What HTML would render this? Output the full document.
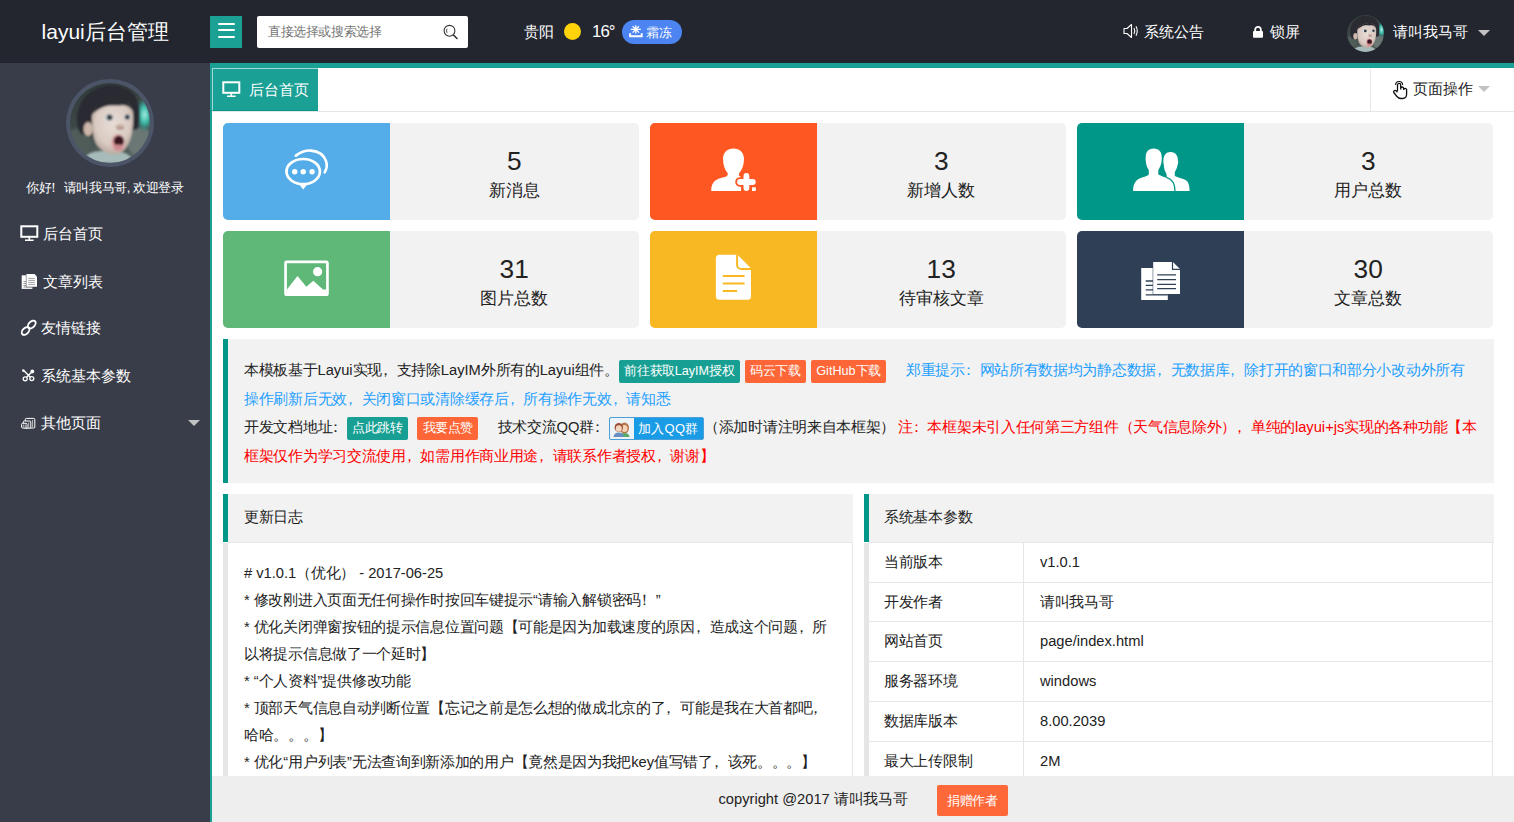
<!DOCTYPE html>
<html><head><meta charset="utf-8">
<style>
*{margin:0;padding:0;box-sizing:border-box}
html,body{width:1514px;height:822px;overflow:hidden;background:#fff}
body{font-family:"Liberation Sans",sans-serif;color:#222;position:relative}
.a{position:absolute}
.nw{white-space:nowrap}
#hdr{left:0;top:0;width:1514px;height:63px;background:#23262E}
#side{left:0;top:63px;width:210px;height:759px;background:#393D49}
#mainb{left:210px;top:63px;width:1304px;height:759px;border-left:2px solid #1AA094;border-top:5px solid #1AA094;background:#fff}
.card{position:absolute;height:98px;border-radius:5px;overflow:hidden;background:#f2f2f2}
.card .ic{position:absolute;left:0;top:0;bottom:0;width:166.8px}
.card .num{position:absolute;left:40%;right:0;text-align:center;font-size:26.25px;line-height:34px;top:21px;color:#222}
.card .lbl{position:absolute;left:40%;right:0;text-align:center;font-size:16.8px;line-height:22px;top:57px;color:#222}
.btn{display:inline-block;height:22.5px;line-height:22.5px;padding:0;white-space:nowrap;font-size:13px;letter-spacing:-0.4px;color:#fff;border-radius:2px;vertical-align:middle}
.t15{font-size:15px;letter-spacing:-0.3px}
.t13{font-size:13px;letter-spacing:-0.4px}
.t17{font-size:17px;letter-spacing:-0.2px}
.L{font-size:14.7px;letter-spacing:0}
.p{font-style:normal;position:relative;left:-4px}
.L13{font-size:12.6px;letter-spacing:0}
.g{background:#189F93}
.o{background:#FE6637}
</style></head>
<body>
<svg width="0" height="0" style="position:absolute"><defs>
<clipPath id="cc"><circle cx="50" cy="50" r="50"/></clipPath>
<filter id="bl" x="-10%" y="-10%" width="120%" height="120%"><feGaussianBlur stdDeviation="1.1"/></filter>
<linearGradient id="bgg" x1="0" y1="0" x2="0.3" y2="1"><stop offset="0" stop-color="#2e3739"/><stop offset="0.5" stop-color="#3c4746"/><stop offset="1" stop-color="#56635f"/></linearGradient>
<radialGradient id="fg" cx="0.5" cy="0.42" r="0.62"><stop offset="0" stop-color="#e8ddd7"/><stop offset="0.65" stop-color="#dacbc3"/><stop offset="1" stop-color="#b3a199"/></radialGradient>
<radialGradient id="tg" cx="0.6" cy="0.45" r="0.55"><stop offset="0" stop-color="#a6ece0"/><stop offset="0.45" stop-color="#3cbcaa"/><stop offset="1" stop-color="#2f6f69" stop-opacity="0"/></radialGradient>
<symbol id="kid" viewBox="0 0 100 100"><g clip-path="url(#cc)"><g filter="url(#bl)">
<rect x="-5" y="-5" width="110" height="110" fill="url(#bgg)"/>
<ellipse cx="10" cy="75" rx="16" ry="18" fill="#4f5c59"/>
<ellipse cx="88" cy="74" rx="16" ry="18" fill="#6b7774"/>
<ellipse cx="91" cy="41.7" rx="11" ry="21" fill="url(#tg)"/>
<path d="M15 100 C18 88 30 84 48 85 C66 85 76 88 80 100 Z" fill="#a7bbba"/>
<path d="M9 50 C7 30 18 8 45 3 C70 0 86 14 87 34 C88 46 86 56 84 58 L76 58 L70 28 L30 34 L27 66 L14 64 C11 60 9 56 9 50 Z" fill="#2a2a31"/>
<ellipse cx="22.7" cy="57.5" rx="5.7" ry="8.8" fill="#cdb7aa"/>
<path d="M27.5 46 C27 36 31 29 40 27 C50 22 62 20 72 25 C78 28 79.5 36 79 46 C78.5 60 77 68 73 76 C68 86 62 89 56 89 C48 89 40 85 34 78 C29 71 28 58 27.5 46 Z" fill="url(#fg)"/>
<path d="M27 40 C30 30 37 25 46 24 C54 21 63 20 71 24 C76 27 79 31 80 37 C76 30 70 27 63 28 C55 28.5 47 26.5 40 31 C33 34 29 38 27 40 Z" fill="#2a2a31"/>
<ellipse cx="61.5" cy="24.5" rx="3" ry="3.2" fill="#2a2a31"/>
<ellipse cx="48.6" cy="43" rx="6.5" ry="4" fill="#d6d6d8"/><circle cx="49.5" cy="43" r="3.6" fill="#2c3a46"/>
<ellipse cx="71.4" cy="42.5" rx="5" ry="3.8" fill="#d6d6d8"/><circle cx="71.6" cy="42.5" r="3.2" fill="#2c3a46"/>
<ellipse cx="62.5" cy="55" rx="5.5" ry="3.5" fill="#c9aea2"/>
<ellipse cx="60.5" cy="57" rx="1.3" ry="1" fill="#6b4a48"/><ellipse cx="65" cy="57" rx="1.3" ry="1" fill="#6b4a48"/>
<ellipse cx="60" cy="74.5" rx="8.3" ry="10.7" fill="#dfa2a3"/>
<ellipse cx="61" cy="72.5" rx="6.5" ry="6.8" fill="#3a1820"/>
<ellipse cx="60.5" cy="80.5" rx="5.3" ry="3.6" fill="#cf8a90"/>
</g></g></symbol></defs></svg>
<div id="hdr" class="a">
 <div class="a nw" style="left:41.6px;top:20px;font-size:21px;line-height:24px;color:#fff">layui后台管理</div>
 <div class="a" style="left:210px;top:16px;width:32px;height:32px;background:#1AA094">
  <div class="a" style="left:7.5px;top:7.3px;width:17.5px;height:2.2px;border-radius:1px;background:#fff"></div>
  <div class="a" style="left:7.5px;top:13.3px;width:17.5px;height:2.2px;border-radius:1px;background:#fff"></div>
  <div class="a" style="left:7.5px;top:19.5px;width:17.5px;height:2.4px;border-radius:1px;background:#fff"></div>
 </div>
 <div class="a" style="left:257px;top:16px;width:211px;height:32px;background:#fff;border-radius:2px">
  <div class="a nw t13" style="left:11px;top:8px;line-height:16px;color:#757575">直接选择或搜索选择</div>
  <svg class="a" style="left:184px;top:7px" width="20" height="20" viewBox="0 0 20 20"><circle cx="8.5" cy="7.8" r="5.4" fill="none" stroke="#333" stroke-width="1.1"/><path d="M6 5.8 Q5 7.8 6 9.8" fill="none" stroke="#333" stroke-width="0.9"/><path d="M12.5 12 L16 15.5" stroke="#333" stroke-width="1.6" stroke-linecap="round"/></svg>
 </div>
 <div class="a nw" style="left:524px;top:23px;font-size:15px;line-height:17px;color:#fff">贵阳</div>
 <div class="a" style="left:563.7px;top:22.5px;width:17.6px;height:17.6px;border-radius:50%;background:#FFD30A"></div>
 <div class="a nw" style="left:592px;top:22px;font-size:16.8px;line-height:19px;color:#fff;letter-spacing:-0.9px">16°</div>
 <div class="a" style="left:622px;top:20px;width:59.5px;height:23.5px;border-radius:12px;background:#4C84F2">
  <svg class="a" style="left:6px;top:4px" width="16" height="14" viewBox="0 0 16 14"><path d="M7.8 1.2 V9.6 M2.8 5.4 H12.8 M4.6 2.2 L11 8.6 M11 2.2 L4.6 8.6" stroke="#fff" stroke-width="1.3" fill="none"/><path d="M2.1 9.3 V12.2 H13.7 V9.3" stroke="#fff" stroke-width="2" fill="none"/></svg>
  <div class="a nw" style="left:24.3px;top:4.5px;font-size:13px;line-height:15px;color:#fff">霜冻</div>
 </div>
 <svg class="a" style="left:1122px;top:22px" width="18" height="18" viewBox="0 0 18 18"><path d="M2 6.5 H5 L9.5 2.5 V15.5 L5 11.5 H2 Z" fill="none" stroke="#fff" stroke-width="1.1" stroke-linejoin="round"/><path d="M12 6 Q13.5 9 12 12 M14 4.3 Q16.5 9 14 13.7" fill="none" stroke="#fff" stroke-width="1.1"/></svg>
 <div class="a nw" style="left:1144px;top:23px;font-size:15px;line-height:17px;color:#fff">系统公告</div>
 <svg class="a" style="left:1252px;top:24px" width="12" height="15" viewBox="0 0 12 15"><path d="M3.2 7.5 V5.6 A2.8 2.8 0 0 1 8.8 5.6 V7.5" fill="none" stroke="#fff" stroke-width="1.8"/><rect x="1" y="6.9" width="10" height="6.8" rx="1" fill="#fff"/></svg>
 <div class="a nw" style="left:1270px;top:23px;font-size:15px;line-height:17px;color:#fff">锁屏</div>
 <svg class="a" style="left:1347px;top:15.3px" width="37" height="37"><use href="#kid"/></svg>
 <div class="a nw" style="left:1393px;top:23px;font-size:15px;line-height:17px;color:#fff">请叫我马哥</div>
 <div class="a" style="left:1477.5px;top:30px;width:0;height:0;border-left:6.3px solid transparent;border-right:6.3px solid transparent;border-top:6.3px solid #c2c2c2"></div>
</div>
<div id="side" class="a">
 <div class="a" style="left:65.5px;top:15.5px;width:88px;height:88px;border-radius:50%;background:#4b5567"></div>
 <svg class="a" style="left:69.5px;top:19.5px" width="80" height="80"><use href="#kid"/></svg>
 <div class="a nw t13" style="left:26px;top:117px;line-height:16px;color:#fff">你好<i class=p>！</i>请叫我马哥, 欢迎登录</div>
 <svg class="a" style="left:20px;top:162px" width="19" height="17" viewBox="0 0 19 17"><rect x="1.3" y="1.3" width="16" height="10.5" fill="none" stroke="#fff" stroke-width="2"/><path d="M9.3 12 V14.5 M5 15.2 H13.6" stroke="#fff" stroke-width="1.6"/></svg>
 <div class="a nw" style="left:43px;top:162px;font-size:15px;line-height:17px;color:#fff">后台首页</div>
 <svg class="a" style="left:16px;top:205px" width="26" height="24" viewBox="0 0 26 24"><rect x="5.7" y="7.3" width="10.7" height="13.6" fill="#fff"/><path d="M7.5 13.5 H10.4 M7.5 15.5 H10.4 M7.5 17.5 H10.4 M7.5 19 H16" stroke="#777" stroke-width="0.8"/><path d="M9.9 5.5 H18.7 L21.5 8.3 V19.2 H9.9 Z" fill="#393D49"/><path d="M10.4 6 H18.5 L21 8.5 V18.7 H10.4 Z" fill="#fff"/><path d="M12.3 10.4 H18.9 M12.3 12.4 H18.9 M12.3 14.4 H18.9 M12.3 16.4 H18.9" stroke="#888" stroke-width="0.8"/></svg>
 <div class="a nw" style="left:43px;top:209.5px;font-size:15px;line-height:17px;color:#fff">文章列表</div>
 <svg class="a" style="left:16px;top:251px" width="26" height="26" viewBox="0 0 26 26"><ellipse cx="9.6" cy="17" rx="4.6" ry="2.9" transform="rotate(-45 9.6 17)" fill="none" stroke="#fff" stroke-width="1.9"/><ellipse cx="15.8" cy="10.5" rx="4.6" ry="2.9" transform="rotate(-45 15.8 10.5)" fill="none" stroke="#fff" stroke-width="1.9"/></svg>
 <div class="a nw" style="left:41px;top:256px;font-size:15px;line-height:17px;color:#fff">友情链接</div>
 <svg class="a" style="left:16px;top:299px" width="26" height="26" viewBox="0 0 26 26"><path d="M10.6 15.3 L17 8.8 M14.4 15.3 L8 8.8" stroke="#fff" stroke-width="1.4"/><circle cx="9.2" cy="16.8" r="2" fill="none" stroke="#fff" stroke-width="1.3"/><circle cx="15.8" cy="16.6" r="2" fill="none" stroke="#fff" stroke-width="1.3"/><circle cx="7.3" cy="8.6" r="1.3" fill="#fff"/><circle cx="16.3" cy="9.5" r="1.9" fill="#fff"/></svg>
 <div class="a nw" style="left:41px;top:303.5px;font-size:15px;line-height:17px;color:#fff">系统基本参数</div>
 <svg class="a" style="left:16px;top:347px" width="26" height="26" viewBox="0 0 26 26"><rect x="9.3" y="8.4" width="9.5" height="9.6" rx="1" fill="none" stroke="#fff" stroke-width="1"/><rect x="7.3" y="11" width="7.5" height="7" rx="1" fill="#393D49" stroke="#fff" stroke-width="1"/><rect x="5.6" y="13.3" width="5.4" height="4.7" rx="1" fill="#393D49" stroke="#fff" stroke-width="1"/><path d="M7.3 14.5 V17 M9.2 14.5 V17 M16.6 10 V17 M12.7 12.5 V17" stroke="#ccc" stroke-width="0.9"/></svg>
 <div class="a nw" style="left:41px;top:351px;font-size:15px;line-height:17px;color:#fff">其他页面</div>
 <div class="a" style="left:187.5px;top:357px;width:0;height:0;border-left:6.3px solid transparent;border-right:6.3px solid transparent;border-top:6.3px solid #c2c2c2"></div>
</div>
<div id="mainb" class="a"></div>
<div class="a" style="left:212px;top:68px;width:1302px;height:44px;background:#fff;border-bottom:1px solid #e6e6e6"></div>
<div class="a" style="left:212px;top:68px;width:106px;height:43px;background:#1AA094;border-left:1px solid #a3d9d4;border-top:1px solid #a3d9d4;border-bottom:1px solid #009688"></div>
<svg class="a" style="left:222px;top:81px" width="19" height="17" viewBox="0 0 19 17"><rect x="1.3" y="1.3" width="16" height="10.5" fill="none" stroke="#fff" stroke-width="2"/><path d="M9.3 12 V14.5 M5 15.2 H13.6" stroke="#fff" stroke-width="1.6"/></svg>
<div class="a nw" style="left:248.5px;top:81px;font-size:15px;line-height:17px;color:#fff">后台首页</div>
<div class="a" style="left:1370px;top:69px;width:1px;height:42px;background:#e6e6e6"></div>
<svg class="a" style="left:1392px;top:80px" width="17" height="20" viewBox="0 0 17 20"><path d="M5.5 11 V5 A1.6 1.6 0 0 1 8.7 5 V9.5 M8.7 8.5 A1.5 1.5 0 0 1 11.7 8.5 V10 M11.7 9.5 A1.5 1.5 0 0 1 14.6 9.5 V14 Q14.6 18.5 10.5 18.5 H9 Q6.5 18.5 4.5 16 L1.8 12.5 A1.4 1.4 0 0 1 4 10.8 L5.5 12.3" fill="none" stroke="#111" stroke-width="1.3" stroke-linejoin="round"/><path d="M3.6 5 A3.3 3.3 0 0 1 10.6 5" fill="none" stroke="#111" stroke-width="1.1"/></svg>
<div class="a nw" style="left:1413px;top:80px;font-size:15px;line-height:17px;color:#222">页面操作</div>
<div class="a" style="left:1477.8px;top:86px;width:0;height:0;border-left:6.2px solid transparent;border-right:6.2px solid transparent;border-top:6.5px solid #c2c2c2"></div>
<div class="card" style="left:223px;top:122.6px;width:416px;height:97.4px"><div class="ic" style="background:#54ade8"><svg class="a" style="left:53px;top:18px" width="60" height="56" viewBox="0 0 60 56"><ellipse cx="27.2" cy="30.6" rx="16.7" ry="12.6" fill="none" stroke="#fff" stroke-width="2.7"/><path d="M22.5 42.5 L27.2 48.5 L31.9 42.5 Z" fill="#fff"/><circle cx="18.7" cy="30.7" r="2.7" fill="#fff"/><circle cx="27.2" cy="30.7" r="2.7" fill="#fff"/><circle cx="36.1" cy="30.7" r="2.7" fill="#fff"/><path d="M19.8 14.6 Q27 9.2 35 9.6 Q46.5 10.5 50 20 Q52 26 48.7 31.3" fill="none" stroke="#fff" stroke-width="2.6" stroke-linecap="round"/></svg></div><div class="num">5</div><div class="lbl">新消息</div></div>
<div class="card" style="left:650px;top:122.6px;width:416px;height:97.4px"><div class="ic" style="background:#FF5722"><svg class="a" style="left:53px;top:18px" width="60" height="56" viewBox="0 0 60 56"><path d="M30.5 7.5 C36.5 7.5 41 11.5 41 18 C41 24 39 29 36 32.5 L36 34.5 C37 35.5 38 36 38.5 36.5 L38 50 L8.2 50 C8.2 43 11 38.5 18 37 C22 36 24.5 35.5 24.8 33.5 L24.8 32.5 C22 29 20 24 20 18 C20 11.5 24.5 7.5 30.5 7.5 Z" fill="#fff"/><path d="M37 41 H49.8 M43.4 34.9 V47.1" stroke="#FF5722" stroke-width="9.6" stroke-linecap="round"/><path d="M37 41 H49.8 M43.4 34.9 V47.1" stroke="#fff" stroke-width="5.8" stroke-linecap="round"/><rect x="49" y="46.3" width="3.8" height="3.7" fill="#fff"/></svg></div><div class="num">3</div><div class="lbl">新增人数</div></div>
<div class="card" style="left:1077px;top:122.6px;width:416px;height:97.4px"><div class="ic" style="background:#009688"><svg class="a" style="left:51px;top:18px" width="68" height="56" viewBox="0 0 68 56"><path d="M42.6 11 C48 11 50 15 50 20 C50.5 21 50 23 49.6 24 C49 27 48 29 46.8 31 L46.8 35 C50 36.5 54 37.5 57 38.7 C60.5 40 61.6 45 61.6 50 L40 50 L38.5 33 C37 30.5 36 27.5 35.8 24 C35.4 22.5 35.3 20.5 35.4 19.5 C35.6 14 38 11 42.6 11 Z" fill="#fff"/><path d="M25.7 7.5 C31 7.5 33.7 11 33.7 16 C34 17.5 33.7 19.5 33.5 21 C33 24.5 31.5 27 30.3 29 L30.3 33.4 C33.5 35 36 36 38.5 36.8 C44 38 47 43 47 50 L5.1 50 C5.1 44 7 38.5 14 36.5 C16.5 35.8 19.5 34.7 20.8 33.4 L20.8 29 C19.5 27 18.2 24.5 17.9 21 C17.6 19.5 17.5 17.5 17.7 16 C17.7 11 20.5 7.5 25.7 7.5 Z" fill="#fff"/><path d="M38.5 36.3 C44 38 47 43 47 50" fill="none" stroke="#009688" stroke-width="1.3"/></svg></div><div class="num">3</div><div class="lbl">用户总数</div></div>
<div class="card" style="left:223px;top:230.8px;width:416px;height:97.4px"><div class="ic" style="background:#5FB878"><svg class="a" style="left:53px;top:19px" width="60" height="56" viewBox="0 0 60 56"><rect x="9.55" y="11.95" width="41.9" height="32.7" rx="1.2" fill="none" stroke="#fff" stroke-width="2.7"/><path d="M10.9 39.5 L21.5 25.9 L30.3 36.8 L37.3 30.7 L47 39.5 L50 39.5 L50 44 L10.9 44 Z" fill="#fff"/><circle cx="41.6" cy="21.7" r="4.6" fill="#fff"/></svg></div><div class="num">31</div><div class="lbl">图片总数</div></div>
<div class="card" style="left:650px;top:230.8px;width:416px;height:97.4px"><div class="ic" style="background:#F7B824"><svg class="a" style="left:53px;top:19px" width="60" height="56" viewBox="0 0 60 56"><path d="M16.4 4.8 H34.5 L48 18.3 V46.2 A3.5 3.5 0 0 1 44.5 49.7 H16.4 A3.5 3.5 0 0 1 12.9 46.2 V8.3 A3.5 3.5 0 0 1 16.4 4.8 Z" fill="#fff"/><path d="M34.1 4.8 V15 A4 4 0 0 0 38.1 19 H48.5" fill="none" stroke="#F7B824" stroke-width="2"/><path d="M19.8 26.1 H41.6 M19.8 33.4 H41.6 M19.8 40.9 H34.1" stroke="#F7B824" stroke-width="2"/></svg></div><div class="num">13</div><div class="lbl">待审核文章</div></div>
<div class="card" style="left:1077px;top:230.8px;width:416px;height:97.4px"><div class="ic" style="background:#2F4056"><svg class="a" style="left:53px;top:19px" width="60" height="56" viewBox="0 0 60 56"><rect x="11.2" y="18" width="26.6" height="32" fill="#fff"/><path d="M15.7 31 H23 M15.7 35.3 H23 M15.7 39.9 H23 M15.7 44.8 H37.8" stroke="#2F4056" stroke-width="1.3"/><path d="M22.7 11.4 H43.2 L50.5 18.7 V44.4 H22.7 Z" fill="#2F4056"/><path d="M23.2 11.9 H42.9 L50 19 V43.9 H23.2 Z" fill="#fff"/><path d="M42.5 11.9 V19.3 H50" fill="none" stroke="#2F4056" stroke-width="1.2"/><path d="M27.2 24.9 H46 M27.2 29.6 H46 M27.2 34.4 H46 M27.2 38.7 H46" stroke="#2F4056" stroke-width="1.3"/></svg></div><div class="num">30</div><div class="lbl">文章总数</div></div>
<div class="a" style="left:223px;top:339px;width:1271px;height:144px;background:#f2f2f2;border-left:5px solid #009688"></div>
<div class="a nw t15" style="left:244px;top:361px;line-height:18px;color:#222">本模板基于<span class=L>Layui</span>实现<i class=p>，</i>支持除<span class=L>LayIM</span>外所有的<span class=L>Layui</span>组件。</div>
<div class="a btn g" style="left:619px;top:360.3px;width:120.7px;text-align:center">前往获取<span class=L13>LayIM</span>授权</div>
<div class="a btn o" style="left:745px;top:360.3px;width:60.5px;text-align:center">码云下载</div>
<div class="a btn o" style="left:811px;top:360.3px;width:75px;text-align:center"><span class=L13>GitHub</span>下载</div>
<div class="a nw t15" style="left:906px;top:361px;line-height:18px;color:#1E9FFF">郑重提示<i class=p>：</i>网站所有数据均为静态数据<i class=p>，</i>无数据库<i class=p>，</i>除打开的窗口和部分小改动外所有</div>
<div class="a nw t15" style="left:244px;top:390px;line-height:18px;color:#1E9FFF">操作刷新后无效<i class=p>，</i>关闭窗口或清除缓存后<i class=p>，</i>所有操作无效<i class=p>，</i>请知悉</div>
<div class="a nw t15" style="left:244px;top:418px;line-height:18px;color:#222">开发文档地址<i class=p>：</i></div>
<div class="a btn g" style="left:347px;top:417px;width:61px;text-align:center">点此跳转</div>
<div class="a btn o" style="left:417.4px;top:417px;width:60.7px;text-align:center">我要点赞</div>
<div class="a nw t15" style="left:497.8px;top:418px;line-height:18px;color:#222">技术交流<span class=L>QQ</span>群<i class=p>：</i></div>
<div class="a" style="left:609px;top:417px;width:94.6px;height:22.5px;border:1px solid #4a9fd8;border-radius:2px;background:#1a9be6;overflow:hidden">
 <div class="a" style="left:0;top:0;width:23.5px;height:21px;background:#eef3f8"></div>
 <svg class="a" style="left:2px;top:2px" width="20" height="18" viewBox="0 0 20 18"><ellipse cx="12.5" cy="8" rx="4.5" ry="5.5" fill="#b8764a"/><ellipse cx="12.5" cy="8.5" rx="3" ry="3.6" fill="#f3d2b8"/><path d="M7.5 17 Q8 13 12.5 13 Q17 13 17.5 17 Z" fill="#5aaa6a"/><ellipse cx="6.8" cy="7.5" rx="4.2" ry="4.5" fill="#9a4e36"/><ellipse cx="6.8" cy="8.5" rx="3" ry="3.3" fill="#f5d5bd"/><path d="M1.5 17 Q2 12.5 6.8 12.5 Q11.5 12.5 12 17 Z" fill="#6a8ec0"/></svg>
 <div class="a nw" style="left:28px;top:3px;font-size:13px;line-height:15px;color:#fff;letter-spacing:0.3px">加入QQ群</div>
</div>
<div class="a nw t15" style="left:704px;top:418px;line-height:18px;color:#222">（添加时请注明来自本框架）</div>
<div class="a nw t15" style="left:898px;top:418px;line-height:18px;color:#f00">注<i class=p>：</i>本框架未引入任何第三方组件（天气信息除外）<i class=p>，</i>单纯的<span class=L>layui+js</span>实现的各种功能【本</div>
<div class="a nw t15" style="left:244px;top:447px;line-height:18px;color:#f00">框架仅作为学习交流使用<i class=p>，</i>如需用作商业用途<i class=p>，</i>请联系作者授权<i class=p>，</i>谢谢】</div>
<div class="a" style="left:223px;top:494px;width:630px;height:48px;background:#f2f2f2;border-left:5px solid #009688"></div><div class="a" style="left:228px;top:542px;width:625px;height:1px;background:#e6e6e6"></div>
<div class="a nw t15" style="left:244px;top:508.3px;line-height:18px;color:#222">更新日志</div>
<div class="a" style="left:223px;top:543px;width:630px;height:300px;background:#fff;border-left:5px solid #e6e6e6;border-right:1px solid #e6e6e6"></div>
<div class="a nw t15" style="left:244px;top:563.8px;line-height:18px;color:#222"><span class=L># v1.0.1</span>（优化）<span class=L> - 2017-06-25</span></div>
<div class="a nw t15" style="left:244px;top:590.9px;line-height:18px;color:#222"><span class=L>* </span>修改刚进入页面无任何操作时按回车键提示<span class=L>“</span>请输入解锁密码<i class=p>！</i><span class=L>”</span></div>
<div class="a nw t15" style="left:244px;top:617.9px;line-height:18px;color:#222"><span class=L>* </span>优化关闭弹窗按钮的提示信息位置问题【可能是因为加载速度的原因<i class=p>，</i>造成这个问题<i class=p>，</i>所</div>
<div class="a nw t15" style="left:244px;top:645.0px;line-height:18px;color:#222">以将提示信息做了一个延时】</div>
<div class="a nw t15" style="left:244px;top:672.0px;line-height:18px;color:#222"><span class=L>* “</span>个人资料<span class=L>”</span>提供修改功能</div>
<div class="a nw t15" style="left:244px;top:699.1px;line-height:18px;color:#222"><span class=L>* </span>顶部天气信息自动判断位置【忘记之前是怎么想的做成北京的了<i class=p>，</i>可能是我在大首都吧<i class=p>，</i></div>
<div class="a nw t15" style="left:244px;top:726.2px;line-height:18px;color:#222">哈哈。。。】</div>
<div class="a nw t15" style="left:244px;top:753.2px;line-height:18px;color:#222"><span class=L>* </span>优化<span class=L>“</span>用户列表<span class=L>”</span>无法查询到新添加的用户【竟然是因为我把<span class=L>key</span>值写错了<i class=p>，</i>该死。。。】</div>
<div class="a" style="left:864px;top:494px;width:630px;height:48px;background:#f2f2f2;border-left:5px solid #009688"></div><div class="a" style="left:869px;top:542px;width:625px;height:1px;background:#e6e6e6"></div>
<div class="a nw t15" style="left:884px;top:508.3px;line-height:18px;color:#222">系统基本参数</div>
<div class="a" style="left:864px;top:543px;width:630px;height:300px;background:#fff;border-left:5px solid #e6e6e6"></div>
<div class="a" style="left:869px;top:543px;width:624px;height:300px;border-right:1px solid #e6e6e6"></div>
<div class="a" style="left:1023px;top:542px;width:1px;height:240px;background:#e6e6e6"></div>
<div class="a nw t15" style="left:884px;top:553.0px;line-height:18px;color:#222">当前版本</div>
<div class="a nw t15" style="left:1040px;top:553.0px;line-height:18px;color:#222"><span class=L>v1.0.1</span></div>
<div class="a" style="left:869px;top:581.7px;width:624px;height:1px;background:#e6e6e6"></div>
<div class="a nw t15" style="left:884px;top:592.7px;line-height:18px;color:#222">开发作者</div>
<div class="a nw t15" style="left:1040px;top:592.7px;line-height:18px;color:#222">请叫我马哥</div>
<div class="a" style="left:869px;top:621.4px;width:624px;height:1px;background:#e6e6e6"></div>
<div class="a nw t15" style="left:884px;top:632.4px;line-height:18px;color:#222">网站首页</div>
<div class="a nw t15" style="left:1040px;top:632.4px;line-height:18px;color:#222"><span class=L>page/index.html</span></div>
<div class="a" style="left:869px;top:661.1px;width:624px;height:1px;background:#e6e6e6"></div>
<div class="a nw t15" style="left:884px;top:672.1px;line-height:18px;color:#222">服务器环境</div>
<div class="a nw t15" style="left:1040px;top:672.1px;line-height:18px;color:#222"><span class=L>windows</span></div>
<div class="a" style="left:869px;top:700.8px;width:624px;height:1px;background:#e6e6e6"></div>
<div class="a nw t15" style="left:884px;top:711.8px;line-height:18px;color:#222">数据库版本</div>
<div class="a nw t15" style="left:1040px;top:711.8px;line-height:18px;color:#222"><span class=L>8.00.2039</span></div>
<div class="a" style="left:869px;top:740.5px;width:624px;height:1px;background:#e6e6e6"></div>
<div class="a nw t15" style="left:884px;top:751.5px;line-height:18px;color:#222">最大上传限制</div>
<div class="a nw t15" style="left:1040px;top:751.5px;line-height:18px;color:#222"><span class=L>2M</span></div>
<div class="a" style="left:212px;top:775.5px;width:1302px;height:46.5px;background:#eee"></div>
<div class="a nw t15" style="left:718.5px;top:790px;line-height:18px;color:#222"><span class=L>copyright @2017 </span>请叫我马哥</div>
<div class="a nw" style="left:936.5px;top:784.5px;width:71.5px;height:31px;line-height:31px;text-align:center;background:#FF6838;color:#fff;font-size:13px;letter-spacing:-0.4px;border-radius:2px">捐赠作者</div>
</body></html>
